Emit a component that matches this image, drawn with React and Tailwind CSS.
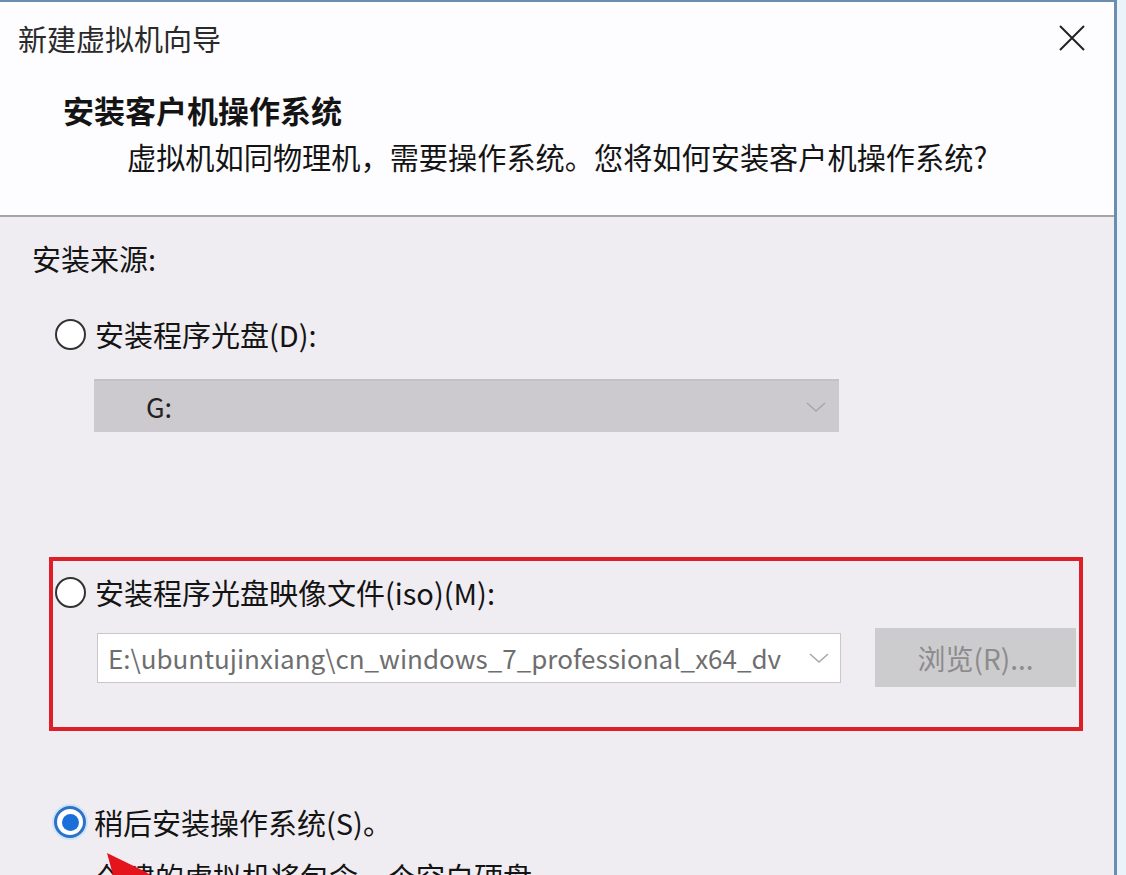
import React from "react";

const font = { fontFamily: '"Noto Sans CJK SC", "Noto Sans", sans-serif' };

const Radio = ({ checked }) =>
  checked ? (
    <span className="flex h-[32px] w-[32px] shrink-0 items-center justify-center rounded-full border-[3px] border-[#2a73c9] bg-white shadow-[0_0_0_2px_#cfe3f7]">
      <span className="block h-[17px] w-[17px] rounded-full bg-[#1a6fd8]" />
    </span>
  ) : (
    <span className="block h-[31px] w-[31px] shrink-0 rounded-full border-2 border-[#333] bg-white" />
  );

const Chevron = () => (
  <svg width="22" height="12" viewBox="0 0 22 12" className="shrink-0">
    <path d="M2 2 L11 10 L20 2" fill="none" stroke="#a8a6aa" strokeWidth="1.5" />
  </svg>
);

const App = () => {
  return (
    <div
      className="relative h-[875px] w-[1126px] overflow-hidden bg-[#eaf3f9] text-[#141414]"
      style={font}
    >
      <div className="h-[875px] w-[1117px] border-r-[3px] border-t-2 border-[#6a8db0] bg-[#f0edf2]">
        {/* header */}
        <div className="h-[215px] border-b-2 border-[#a6a4a8] bg-[#fdfcfe]">
          <div className="flex items-center justify-between pl-[18px] pr-[28px] pt-[16px]">
            <div className="text-[29px] leading-[40px] text-[#2a2a2a]">新建虚拟机向导</div>
            <svg width="28" height="28" viewBox="0 0 28 28">
              <path d="M2 2 L26 26 M26 2 L2 26" stroke="#222" strokeWidth="2" />
            </svg>
          </div>
          <div className="mt-[32px] pl-[63px] text-[31px] font-bold leading-[40px]">
            安装客户机操作系统
          </div>
          <div className="mt-[6px] pl-[127px] text-[29.2px] leading-[40px]">
            虚拟机如同物理机，需要操作系统。您将如何安装客户机操作系统?
          </div>
        </div>

        {/* body */}
        <div className="pt-[21px]">
          <div className="pl-[32px] text-[29px] leading-[40px]">安装来源:</div>

          <div className="mt-[36px] flex items-center gap-[9px] pl-[55px]">
            <Radio />
            <span className="text-[29px] leading-[40px]">安装程序光盘(D):</span>
          </div>

          <div className="ml-[94px] mt-[25px] flex h-[53px] w-[745px] items-center justify-between border-t-2 border-[#c4c1c6] bg-[#cdcacf] pl-[52px] pr-[12px]">
            <span className="text-[27px] leading-[40px] text-[#222]">G:</span>
            <Chevron />
          </div>

          <div className="ml-[49px] mt-[125px] h-[174px] w-[1034px] border-4 border-[#df1f28] pl-[2px] pt-[11px]">
            <div className="flex items-center gap-[9px]">
              <Radio />
              <span className="text-[29px] leading-[40px]">安装程序光盘映像文件(iso)(M):</span>
            </div>
            <div className="ml-[42px] mt-[16px] flex items-center gap-[34px]">
              <div className="flex h-[50px] w-[744px] items-center justify-between border border-[#c9c7cb] bg-white pl-[10px] pr-[10px]">
                <span className="overflow-hidden whitespace-nowrap text-[26px] leading-[40px] text-[#6e6e6e]">
                  E:\ubuntujinxiang\cn_windows_7_professional_x64_dv
                </span>
                <Chevron />
              </div>
              <div className="flex h-[59px] w-[201px] items-center justify-center bg-[#cccbcd] text-[28px] leading-[40px] text-[#8c8b8d]">
                浏览(R)...
              </div>
            </div>
          </div>

          <div className="mt-[71px] flex items-center gap-[8px] pl-[54px]">
            <Radio checked />
            <span className="text-[29px] leading-[40px]">稍后安装操作系统(S)。</span>
          </div>

          <div className="mt-[14px] pl-[97px] text-[29px] leading-[40px]">
            创建的虚拟机将包含一个空白硬盘。
          </div>
        </div>
      </div>

      {/* red annotation arrow */}
      <svg className="absolute left-0 top-0" width="1126" height="875" viewBox="0 0 1126 875">
        <polygon points="107,853 146,872 150,875 113,875" fill="#e3141c" />
      </svg>
    </div>
  );
};

export default App;
